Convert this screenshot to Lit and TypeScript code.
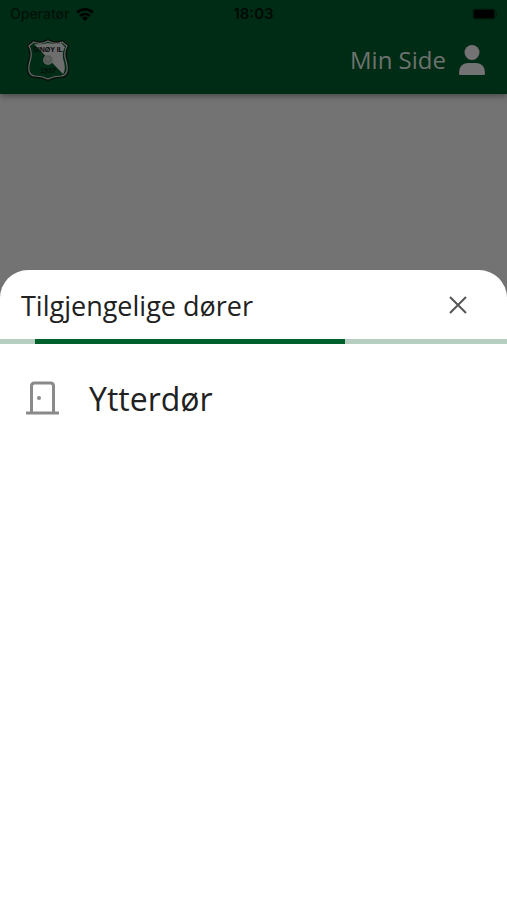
import { LitElement, html, css } from "lit";
import { customElement, property } from "lit/decorators.js";

@customElement("status-bar")
class StatusBar extends LitElement {
  static styles = css`
    :host {
      display: grid;
      grid-template-columns: 1fr auto 1fr;
      align-items: center;
      height: 28px;
      padding: 0 10px;
      color: #000a04;
      font: 14px/20px Inter, "Liberation Sans", sans-serif;
    }
    .carrier {
      display: flex;
      align-items: center;
      gap: 7px;
      color: #001208;
      font-weight: 500;
    }
    .carrier svg {
      color: #000502;
    }
    .time {
      font-size: 15px;
      font-weight: 600;
    }
    .battery {
      justify-self: end;
    }
    svg {
      display: block;
    }
  `;

  render() {
    return html`
      <div class="carrier">
        <span>Operatør</span>
        <svg width="18" height="13" viewBox="0 0 18 13" fill="none" stroke="currentColor" stroke-width="2.7" aria-hidden="true">
          <path d="M1 4.6a11.6 11.6 0 0 1 16 0M4 8a7.2 7.2 0 0 1 10 0" />
          <path d="M9 13l-3-3a4.3 4.3 0 0 1 6 0z" fill="currentColor" stroke="none" />
        </svg>
      </div>
      <div class="time">18:03</div>
      <svg class="battery" width="25" height="12" viewBox="0 0 25 12" aria-hidden="true">
        <rect x="0.5" y="0.5" width="23" height="11" rx="3" fill="#001a0c" />
        <rect x="2" y="2" width="20" height="8" rx="1" fill="#000" />
        <rect x="24" y="4" width="1" height="4" fill="#001a0c" />
      </svg>
    `;
  }
}

@customElement("club-crest")
class ClubCrest extends LitElement {
  static styles = css`
    :host,
    svg {
      display: block;
    }
    text {
      font: 700 7px "Liberation Sans", sans-serif;
      text-anchor: middle;
      fill: #080c0a;
    }
  `;

  render() {
    const shield =
      "M7 2Q14 5 21 1Q28 5 35 2L41 7Q37 14 40 22Q44 37 35 38Q27 38 21 41Q15 38 7 38Q-2 37 2 22Q5 14 1 7Z";
    return html`
      <svg width="42" height="42" viewBox="0 0 42 42" role="img" aria-label="Klubblogo">
        <path d=${shield} fill="#002c16" stroke="#07110c" stroke-width="2" />
        <path d="M7 5Q14 6 21 4Q28 6 34 4L38 8Q34 15 37 23Q39 31 36 35Z" fill="#6e6e6e" />
        <path
          d="M7 3Q14 6 21 2Q28 6 35 3L40 7Q36 14 39 22Q43 36 34 37Q27 37 21 40Q15 37 8 37Q-1 36 3 22Q6 14 2 7Z"
          fill="none"
          stroke="#686866"
          stroke-width="1.2"
        />
        <text x="21" y="13">SINØY IL</text>
        <text x="21" y="34">1937</text>
        <circle cx="21" cy="21" r="5" fill="#5c615e" />
        <path d="M18 19l3-2 3 2-1 4h-4z" fill="none" stroke="#4b514e" stroke-width="0.7" />
      </svg>
    `;
  }
}

@customElement("door-sheet")
class DoorSheet extends LitElement {
  @property({ type: Array }) doors: string[] = [];

  static styles = css`
    :host {
      display: block;
      min-height: 70vh;
      background: #fff;
      border-radius: 28px 28px 0 0;
      color: #212121;
    }
    .head {
      display: flex;
      align-items: center;
      justify-content: space-between;
      height: 69px;
      padding: 0 32px 0 21px;
    }
    h2 {
      margin: 0;
      padding-top: 2px;
      font-size: 27px;
      font-weight: 400;
      line-height: 36px;
    }
    button {
      border: 0;
      background: none;
      color: inherit;
      font: inherit;
      cursor: pointer;
    }
    .close {
      padding: 8px;
      color: #555;
    }
    svg {
      display: block;
      flex: none;
    }
    .track {
      height: 5px;
      background: #b5cec0;
    }
    .bar {
      width: 61%;
      height: 100%;
      margin-left: 7%;
      background: #00602b;
    }
    ul {
      list-style: none;
      margin: 0;
      padding: 23px 0;
    }
    .door {
      display: flex;
      align-items: center;
      gap: 30px;
      width: 100%;
      padding: 8px 26px;
      font-size: 32px;
      line-height: 48px;
      text-align: left;
    }
    .door svg {
      color: #8a8a8a;
    }
  `;

  render() {
    return html`
      <div class="head">
        <h2>Tilgjengelige dører</h2>
        <button class="close" aria-label="Lukk">
          <svg width="18" height="18" viewBox="0 0 18 18" stroke="currentColor" stroke-width="2">
            <path d="M1 1l16 16M17 1L1 17" />
          </svg>
        </button>
      </div>
      <div class="track" role="progressbar" aria-label="Laster dører"><div class="bar"></div></div>
      <ul>
        ${this.doors.map(
          (name) => html`
            <li>
              <button class="door">
                <svg width="33" height="36" viewBox="0 0 33 36" fill="none" stroke="currentColor" stroke-width="3" aria-hidden="true">
                  <path d="M0 32H33M5.500 32V5Q5.500 2 8.500 2H24.500Q27.500 2 27.500 5V32" />
                  <circle cx="13" cy="17" r="2" fill="currentColor" stroke="none" />
                </svg>
                <span>${name}</span>
              </button>
            </li>
          `
        )}
      </ul>
    `;
  }
}

@customElement("app-root")
class AppRoot extends LitElement {
  static styles = css`
    :host {
      display: flex;
      flex-direction: column;
      min-height: 100vh;
      background: #737373;
      font-family: "Open Sans", "Noto Sans", sans-serif;
    }
    header {
      background: #002c16;
      box-shadow: 0 2px 6px rgba(0, 0, 0, 0.4);
    }
    nav {
      display: flex;
      align-items: center;
      justify-content: space-between;
      height: 63px;
      padding: 0 22px 3px 27px;
    }
    .profile {
      display: flex;
      align-items: center;
      gap: 13px;
      color: #6e726e;
      font-size: 24px;
      line-height: 34px;
      text-decoration: none;
    }
    .profile svg {
      color: #737373;
    }
    .backdrop {
      flex: 1;
    }
  `;

  render() {
    return html`
      <header>
        <status-bar></status-bar>
        <nav>
          <club-crest></club-crest>
          <a class="profile" href="#min-side">
            <span>Min Side</span>
            <svg width="26" height="30" viewBox="0 0 26 30" fill="currentColor" aria-hidden="true">
              <circle cx="13" cy="7.5" r="7.5" />
              <path d="M0 28.500q0-10.500 9-10.500h8q9 0 9 10.500q0 1.500-1.500 1.500h-23q-1.500 0-1.500-1.500z" />
            </svg>
          </a>
        </nav>
      </header>
      <div class="backdrop"></div>
      <door-sheet .doors=${["Ytterdør"]}></door-sheet>
    `;
  }
}
